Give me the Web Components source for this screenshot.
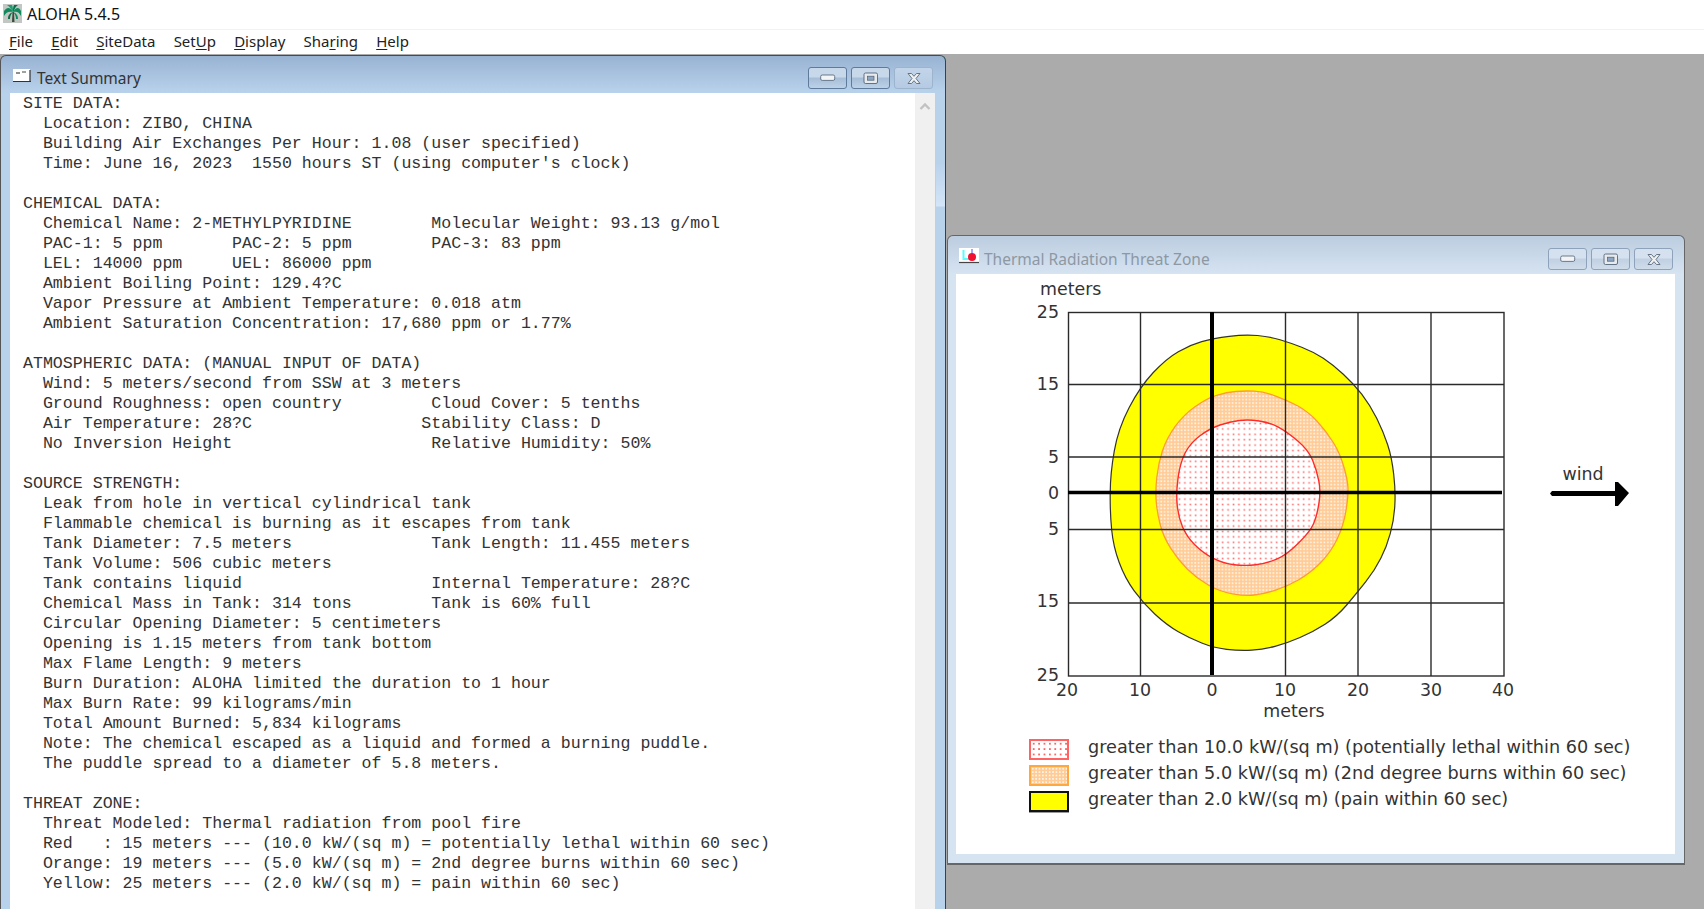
<!DOCTYPE html>
<html>
<head>
<meta charset="utf-8">
<title>ALOHA 5.4.5</title>
<style>
  html, body { margin: 0; height: 100%; overflow: hidden; }
  aloha-app { height: 909px; }
</style>
</head>
<body>
<aloha-app>
  <app-titlebar slot="title">ALOHA 5.4.5</app-titlebar>
  <app-menubar slot="menu"></app-menubar>

  <mdi-window heading="Text Summary" icon="text" active style="left:0;top:1px;width:946px;height:880px">
    <text-summary></text-summary>
  </mdi-window>

  <mdi-window heading="Thermal Radiation Threat Zone" icon="threat" style="left:947px;top:181px;width:738px;height:630px">
    <threat-plot></threat-plot>
    <threat-legend></threat-legend>
  </mdi-window>
</aloha-app>

<script>
// shell: title row + menu row + grey desktop the windows float on
class AlohaApp extends HTMLElement {
  constructor() {
    super();
    this.attachShadow({ mode: 'open' });
    this.shadowRoot.innerHTML = `
      <style>
        :host { display: flex; flex-direction: column; width: 100%; }
        .desktop { position: relative; flex: 1; background: #ababab; overflow: hidden; }
      </style>
      <slot name="title"></slot>
      <slot name="menu"></slot>
      <div class="desktop"><slot></slot></div>
    `;
  }
}

class AppTitlebar extends HTMLElement {
  constructor() {
    super();
    this.attachShadow({ mode: 'open' });
    this.shadowRoot.innerHTML = `
      <style>
        :host {
          display: flex; align-items: center; gap: 5px;
          height: 29px; padding: 0 0 2px 3px; box-sizing: border-box;
          background: #fff; color: #111;
          font: 16px "Noto Sans", sans-serif;
        }
        svg { display: block; }
      </style>
      <svg width="19" height="19" viewBox="0 0 19 19">
        <rect width="19" height="19" fill="#c3c7c3"/>
        <path d="M9 18 L9.5 8 L11 8 L11.5 18 Z" fill="#3d4a3a"/>
        <path d="M10 8 C7 3 4 3 1 7 L1 12 C3 8 6 7 10 8 Z" fill="#0f8a5f"/>
        <path d="M10 8 C13 3 16 3 18 7 L18 12 C16 8 14 7 10 8 Z" fill="#0f8a5f"/>
        <path d="M10 8 C8 5 7 3 4 1 L9 1 C10 3 10 5 10 8 Z" fill="#1aa070"/>
        <path d="M10 8 C12 5 12 3 15 1 L11 1 C10 3 10 5 10 8 Z" fill="#0b6e4c"/>
        <path d="M10 8 C7 9 5 11 5 15 L7 15 C7 12 8 10 10 8 Z" fill="#0b6e4c"/>
        <path d="M10 8 C13 9 15 11 15 15 L13 15 C13 12 12 10 10 8 Z" fill="#0f8a5f"/>
      </svg>
      <span><slot></slot></span>
    `;
  }
}

class AppMenubar extends HTMLElement {
  constructor() {
    super();
    this.attachShadow({ mode: 'open' });
    const items = ['<u>F</u>ile', '<u>E</u>dit', '<u>S</u>iteData', 'Set<u>U</u>p', '<u>D</u>isplay', 'Sha<u>r</u>ing', '<u>H</u>elp'];
    this.shadowRoot.innerHTML = `
      <style>
        :host {
          display: flex; align-items: center; gap: 18.2px;
          height: 25px; padding: 0 0 2px 9px; box-sizing: border-box;
          background: #fff; color: #222;
          border-top: 1px solid #f2f2f2;
          font: 15px "Noto Sans", sans-serif;
        }
        u { text-underline-offset: 2px; text-decoration-thickness: 1px; }
      </style>
      ${items.map(i => `<span>${i}</span>`).join('')}
    `;
  }
}

const windowIcons = {
  text: `<svg width="18" height="14" viewBox="0 0 18 14">
      <rect x="0" y="0" width="17" height="12" fill="#fff"/>
      <path d="M0 12.5 H18 M17 1 V13" stroke="#333" stroke-width="1.2" fill="none"/>
      <path d="M4 3 V5 M6 3 V5 M9 3 H13" stroke="#444" stroke-width="1.2"/>
    </svg>`,
  threat: `<svg width="20" height="16" viewBox="0 0 20 16">
      <rect width="20" height="14" fill="#fff"/>
      <path d="M4.5 2 V11 H14" stroke="#5ff" stroke-width="2" fill="none"/>
      <path d="M13 1 V6" stroke="#88f" stroke-width="1.5"/>
      <circle cx="13" cy="9" r="4" fill="#f01030"/>
      <path d="M0 14.5 H20" stroke="#444" stroke-width="1.2"/>
    </svg>`
};

// one Aero style child window, the caption buttons are drawn here as well
class MdiWindow extends HTMLElement {
  constructor() {
    super();
    this.attachShadow({ mode: 'open' });
  }

  connectedCallback() {
    const minIcon = `<svg width="16" height="8" viewBox="0 0 16 8"><rect x=".7" y="1" width="14" height="5.4" rx="1.5" fill="#f2f4f6" stroke="#4d5f73" stroke-opacity=".8"/></svg>`;
    const maxIcon = `<svg width="16" height="13" viewBox="0 0 16 13"><rect x="1" y="1" width="13.5" height="10.5" rx="1.5" fill="#e8ebee" stroke="#4d5f73" stroke-opacity=".85"/><rect x="4.5" y="4.2" width="6.5" height="4" fill="#8ea6c3" stroke="#4d5f73" stroke-width=".7"/></svg>`;
    const closeIcon = `<svg width="16" height="13" viewBox="0 0 16 13"><path d="M2 1.5 H5.5 L8 4.3 L10.5 1.5 H14 L10 6.5 L14 11.5 H10.5 L8 8.7 L5.5 11.5 H2 L6 6.5 Z" fill="#eef0f2" stroke="#5a6a7a" stroke-width=".9" stroke-linejoin="round"/></svg>`;
    this.shadowRoot.innerHTML = `
      <style>
        :host {
          position: absolute; display: flex; flex-direction: column;
          box-sizing: border-box; padding: 0 9px 9px 8px;
          border: 1px solid #666; border-bottom-width: 2px;
          border-radius: 6px 6px 0 0;
          background: linear-gradient(#bccde0 0, #d6e3f1 38px);
          color: #8d98a3;
          font: 15.5px "Noto Sans", sans-serif;
        }
        :host([active]) {
          padding: 0 10px 9px 9px;
          background:
            linear-gradient(transparent 107px, #d3e5f7 150px, transparent 151px) right top / 9px 100% no-repeat,
            linear-gradient(#98b3d2 0, #b9d2ec 37px);
          border-color: #4a4a4a #1d4a5c #4a4a4a #555;
          color: #333;
        }
        .caption { display: flex; align-items: center; height: 38px; flex: none; }
        :host([active]) .caption { height: 37px; }
        .caption .icon { display: flex; margin: 2px 5px 0 3px; }
        :host([active]) .caption .icon { margin-right: 6px; }
        .caption .text { flex: 1; padding-top: 7px; }
        .buttons { display: flex; gap: 4px; margin-right: 2px; padding-top: 8px; }
        :host([active]) .buttons { padding-top: 7px; }
        button {
          all: unset; display: flex; align-items: center; justify-content: center;
          width: 39px; height: 22px; box-sizing: border-box;
          border: 1px solid #8ea3bb; border-radius: 3px;
          background: linear-gradient(#d5e1ee 0 45%, #c0d0e2 50%, #cfdcea 100%);
        }
        :host([active]) button {
          border-color: #5e7b9c;
          background: linear-gradient(#c7d8ea 0 45%, #a5bdd6 50%, #bdd2e8 100%);
        }
        :host([active]) button.close { border-color: #9db4cd; background: linear-gradient(#c2d5e9, #b5cbe3); }
        .body {
          flex: 1; min-height: 0; background: #fff; color: #333;
          display: flex; flex-direction: column; overflow: hidden;
        }
      </style>
      <div class="caption">
        <span class="icon">${windowIcons[this.getAttribute('icon')] || ''}</span>
        <span class="text">${this.getAttribute('heading') || ''}</span>
        <span class="buttons">
          <button>${minIcon}</button>
          <button>${maxIcon}</button>
          <button class="close">${closeIcon}</button>
        </span>
      </div>
      <div class="body"><slot></slot></div>
    `;
  }
}

const SUMMARY = `SITE DATA:
  Location: ZIBO, CHINA
  Building Air Exchanges Per Hour: 1.08 (user specified)
  Time: June 16, 2023  1550 hours ST (using computer's clock)

CHEMICAL DATA:
  Chemical Name: 2-METHYLPYRIDINE        Molecular Weight: 93.13 g/mol
  PAC-1: 5 ppm       PAC-2: 5 ppm        PAC-3: 83 ppm
  LEL: 14000 ppm     UEL: 86000 ppm
  Ambient Boiling Point: 129.4?C
  Vapor Pressure at Ambient Temperature: 0.018 atm
  Ambient Saturation Concentration: 17,680 ppm or 1.77%

ATMOSPHERIC DATA: (MANUAL INPUT OF DATA)
  Wind: 5 meters/second from SSW at 3 meters
  Ground Roughness: open country         Cloud Cover: 5 tenths
  Air Temperature: 28?C                 Stability Class: D
  No Inversion Height                    Relative Humidity: 50%

SOURCE STRENGTH:
  Leak from hole in vertical cylindrical tank
  Flammable chemical is burning as it escapes from tank
  Tank Diameter: 7.5 meters              Tank Length: 11.455 meters
  Tank Volume: 506 cubic meters
  Tank contains liquid                   Internal Temperature: 28?C
  Chemical Mass in Tank: 314 tons        Tank is 60% full
  Circular Opening Diameter: 5 centimeters
  Opening is 1.15 meters from tank bottom
  Max Flame Length: 9 meters
  Burn Duration: ALOHA limited the duration to 1 hour
  Max Burn Rate: 99 kilograms/min
  Total Amount Burned: 5,834 kilograms
  Note: The chemical escaped as a liquid and formed a burning puddle.
  The puddle spread to a diameter of 5.8 meters.

THREAT ZONE:
  Threat Modeled: Thermal radiation from pool fire
  Red   : 15 meters --- (10.0 kW/(sq m) = potentially lethal within 60 sec)
  Orange: 19 meters --- (5.0 kW/(sq m) = 2nd degree burns within 60 sec)
  Yellow: 25 meters --- (2.0 kW/(sq m) = pain within 60 sec)`;

class TextSummary extends HTMLElement {
  constructor() {
    super();
    this.attachShadow({ mode: 'open' });
    this.shadowRoot.innerHTML = `
      <style>
        :host { display: flex; flex: 1; min-height: 0; }
        pre {
          flex: 1; margin: 0; padding: 1px 0 0 13px; overflow: hidden;
          font: 16.6px/20px "Liberation Mono", monospace; color: #333;
        }
        .scroll { flex: none; width: 20px; background: #f0f0f0; display: flex; justify-content: center; padding-top: 9px; box-sizing: border-box; }
        svg { display: block; }
      </style>
      <pre></pre>
      <div class="scroll">
        <svg width="12" height="8" viewBox="0 0 12 8"><path d="M1.5 7 L6 2.5 L10.5 7" fill="none" stroke="#c2c2c2" stroke-width="2.4"/></svg>
      </div>
    `;
    this.shadowRoot.querySelector('pre').textContent = SUMMARY;
  }
}

// outlines read off the reference, [x, y] in page pixels * 3 relative to (1050,300)
const YELLOW = [[585,103],[660,110],[720,128],[790,155],[850,195],[910,250],[960,315],[1000,395],[1025,470],[1037,575],[1032,660],[1010,740],[975,810],[920,880],[860,950],[790,995],[710,1030],[640,1048],[570,1053],[490,1043],[420,1015],[350,975],[280,910],[225,835],[190,740],[180,640],[181,520],[205,385],[270,260],[350,175],[420,135],[490,115]];
const ORANGE = [[585,272],[640,275],[710,300],[775,335],[830,395],[870,460],[893,540],[895,590],[880,680],[840,760],[780,820],[710,860],[640,882],[585,888],[510,875],[440,835],[385,780],[340,710],[322,640],[316,575],[325,490],[350,415],[400,345],[470,295],[530,277]];
const RED = [[595,358],[660,368],[710,395],[775,450],[800,510],[813,575],[800,650],[780,695],[710,765],[650,790],[585,798],[520,790],[460,760],[410,710],[385,650],[378,580],[390,490],[420,430],[480,385],[540,365]];

// rounds the polygon off: quadratic curves through the edge midpoints
const toPath = pts => {
  const p = pts.map(([x, y]) => [1050 + x / 3, 300 + y / 3]);
  const mid = (a, b) => [(a[0] + b[0]) / 2, (a[1] + b[1]) / 2];
  const f = n => n.toFixed(1);
  const start = mid(p[p.length - 1], p[0]);
  let d = `M${f(start[0])} ${f(start[1])}`;
  p.forEach((pt, i) => {
    const m = mid(pt, p[(i + 1) % p.length]);
    d += ` Q${f(pt[0])} ${f(pt[1])} ${f(m[0])} ${f(m[1])}`;
  });
  return d + ' Z';
};

class ThreatPlot extends HTMLElement {
  constructor() {
    super();
    this.attachShadow({ mode: 'open' });
    const vLines = [1140.5, 1285.5, 1358, 1431];
    const hLines = [384.5, 457, 529.5, 603];
    const yLabels = [[25, 312], [15, 384], [5, 456.5], [0, 492.5], [5, 528.5], [15, 601], [25, 675]];
    const xLabels = [[20, 1067], [10, 1140], [0, 1212], [10, 1285], [20, 1358], [30, 1431], [40, 1503]];
    this.shadowRoot.innerHTML = `
      <style>
        :host { display: block; flex: none; height: 455px; }
        svg { display: block; }
        text { font: 17.4px "DejaVu Sans", sans-serif; fill: #333; dominant-baseline: central; }
      </style>
      <svg width="719" height="455" viewBox="956 274 719 455">
        <defs>
          <pattern id="red" width="5.4" height="5.4" patternUnits="userSpaceOnUse">
            <rect x="1.5" y="1.5" width="1.6" height="1.6" fill="#ff6a6a"/>
          </pattern>
          <pattern id="orange" width="3.4" height="3.4" patternUnits="userSpaceOnUse">
            <rect width="3.4" height="3.4" fill="#ffcb96"/>
            <rect x="1" y="1" width="1.7" height="1.7" fill="#fff4e6"/>
          </pattern>
        </defs>
        <rect x="1068" y="312" width="436" height="364" fill="#fff"/>
        <path d="${toPath(YELLOW)}" fill="#ffff00" stroke="#333" stroke-width="1.2"/>
        <path d="${toPath(ORANGE)}" fill="url(#orange)" stroke="#ff9c30" stroke-width="1.3"/>
        <path d="${toPath(RED)}" fill="#fff"/>
        <path d="${toPath(RED)}" fill="url(#red)" stroke="#ff2a2a" stroke-width="1.4"/>
        <g stroke="#2a2a2a" stroke-width="1.4">
          ${vLines.map(x => `<line x1="${x}" x2="${x}" y1="312" y2="676"/>`).join('')}
          ${hLines.map(y => `<line x1="1068" x2="1504" y1="${y}" y2="${y}"/>`).join('')}
          <rect x="1068.5" y="312.5" width="435.5" height="363.5" fill="none"/>
        </g>
        <line x1="1212" x2="1212" y1="312" y2="675" stroke="#000" stroke-width="4"/>
        <line x1="1068" x2="1502" y1="492.5" y2="492.5" stroke="#000" stroke-width="3.6"/>
        <text x="1040" y="289">meters</text>
        ${yLabels.map(([t, y]) => `<text x="1059" y="${y}" text-anchor="end">${t}</text>`).join('')}
        ${xLabels.map(([t, x]) => `<text x="${x}" y="690" text-anchor="middle">${t}</text>`).join('')}
        <text x="1294" y="711" text-anchor="middle">meters</text>
        <text x="1583" y="474" text-anchor="middle">wind</text>
        <path d="M1552 491 H1615 V482 L1618 482 L1629 493 L1618 506 L1615 506 V496 H1552 L1550 493.5 Z" fill="#000"/>
      </svg>
    `;
  }
}

class ThreatLegend extends HTMLElement {
  constructor() {
    super();
    this.attachShadow({ mode: 'open' });
    const rows = [
      ['red', 'greater than 10.0 kW/(sq m) (potentially lethal within 60 sec)'],
      ['orange', 'greater than 5.0 kW/(sq m) (2nd degree burns within 60 sec)'],
      ['yellow', 'greater than 2.0 kW/(sq m) (pain within 60 sec)']
    ];
    this.shadowRoot.innerHTML = `
      <style>
        :host {
          display: flex; flex-direction: column; gap: 6.3px;
          padding: 10px 0 0 73px;
          font: 17.65px "DejaVu Sans", sans-serif; color: #333;
        }
        .row { display: flex; align-items: center; gap: 19px; height: 20px; white-space: nowrap; }
        .row span { margin-bottom: 5px; }
        i { flex: none; width: 40px; height: 21px; box-sizing: border-box; border: 2px solid; display: block; }
        .red {
          border-color: #ff6464;
          background: radial-gradient(circle at 2.7px 2.7px, #ff6464 .9px, transparent 1.2px) 0 0 / 5.4px 5.4px #fff;
        }
        .orange {
          border-color: #ffa840;
          background: radial-gradient(circle at 1.7px 1.7px, #fff4e6 .8px, transparent 1.1px) 0 0 / 3.4px 3.4px #ffcb96;
        }
        .yellow { border-color: #111; background: #ffff00; box-shadow: 0 1px 0 #999; }
      </style>
      ${rows.map(([c, t]) => `<div class="row"><i class="${c}"></i><span>${t}</span></div>`).join('')}
    `;
  }
}

customElements.define('aloha-app', AlohaApp);
customElements.define('app-titlebar', AppTitlebar);
customElements.define('app-menubar', AppMenubar);
customElements.define('mdi-window', MdiWindow);
customElements.define('text-summary', TextSummary);
customElements.define('threat-plot', ThreatPlot);
customElements.define('threat-legend', ThreatLegend);
</script>
</body>
</html>
